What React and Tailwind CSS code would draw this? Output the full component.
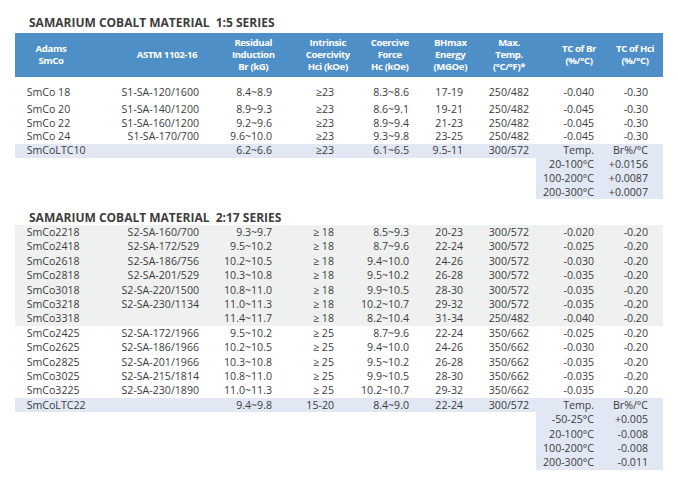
const COLS = "grid grid-cols-[94px_101px_80.5px_68.5px_61.5px_59.5px_64px_63px_56px]"

const CELL = [
  "pl-[11.7px] text-left",
  "pr-[11px] text-right",
  "pr-[18.5px] text-right",
  "pr-[25px] text-right",
  "pr-[11.5px] text-right",
  "pr-[17px] text-right",
  "pr-[15px] text-right",
  "pr-[13px] text-right",
  "pr-[15px] text-right",
]

const HEAD = [
  { cls: "pr-[22px]", lines: ["Adams", "SmCo"] },
  { cls: "pl-[15px]", lines: ["ASTM 1102-16"] },
  { cls: "pl-[6px]", lines: ["Residual", "Induction", "Br (kG)"] },
  { cls: "pl-[6px]", lines: ["Intrinsic", "Coercivity", "Hci (kOe)"] },
  { cls: "", lines: ["Coercive", "Force", "Hc (kOe)"] },
  { cls: "", lines: ["BHmax", "Energy", "(MGOe)"] },
  { cls: "pr-[6px]", lines: ["Max.", "Temp.", "(°C/°F)*"] },
  { cls: "pl-[7px]", lines: ["TC of Br", "(%/°C)"] },
  { cls: "", lines: ["TC of Hci", "(%/°C)"] },
]

const series15 = [
  ["SmCo 18", "S1-SA-120/1600", "8.4~8.9", "≥23", "8.3~8.6", "17-19", "250/482", "-0.040", "-0.30"],
  ["SmCo 20", "S1-SA-140/1200", "8.9~9.3", "≥23", "8.6~9.1", "19-21", "250/482", "-0.045", "-0.30"],
  ["SmCo 22", "S1-SA-160/1200", "9.2~9.6", "≥23", "8.9~9.4", "21-23", "250/482", "-0.045", "-0.30"],
  ["SmCo 24", "S1-SA-170/700", "9.6~10.0", "≥23", "9.3~9.8", "23-25", "250/482", "-0.045", "-0.30"],
]
const ltc10 = ["SmCoLTC10", "", "6.2~6.6", "≥23", "6.1~6.5", "9.5-11", "300/572", "Temp.", "Br%/°C"]
const ltc10Temps = [
  ["20-100°C", "+0.0156"],
  ["100-200°C", "+0.0087"],
  ["200-300°C", "+0.0007"],
]

const series217a = [
  ["SmCo2218", "S2-SA-160/700", "9.3~9.7", "≥ 18", "8.5~9.3", "20-23", "300/572", "-0.020", "-0.20"],
  ["SmCo2418", "S2-SA-172/529", "9.5~10.2", "≥ 18", "8.7~9.6", "22-24", "300/572", "-0.025", "-0.20"],
  ["SmCo2618", "S2-SA-186/756", "10.2~10.5", "≥ 18", "9.4~10.0", "24-26", "300/572", "-0.030", "-0.20"],
  ["SmCo2818", "S2-SA-201/529", "10.3~10.8", "≥ 18", "9.5~10.2", "26-28", "300/572", "-0.035", "-0.20"],
  ["SmCo3018", "S2-SA-220/1500", "10.8~11.0", "≥ 18", "9.9~10.5", "28-30", "300/572", "-0.035", "-0.20"],
  ["SmCo3218", "S2-SA-230/1134", "11.0~11.3", "≥ 18", "10.2~10.7", "29-32", "300/572", "-0.035", "-0.20"],
  ["SmCo3318", "", "11.4~11.7", "≥ 18", "8.2~10.4", "31-34", "250/482", "-0.040", "-0.20"],
]
const series217b = [
  ["SmCo2425", "S2-SA-172/1966", "9.5~10.2", "≥ 25", "8.7~9.6", "22-24", "350/662", "-0.025", "-0.20"],
  ["SmCo2625", "S2-SA-186/1966", "10.2~10.5", "≥ 25", "9.4~10.0", "24-26", "350/662", "-0.030", "-0.20"],
  ["SmCo2825", "S2-SA-201/1966", "10.3~10.8", "≥ 25", "9.5~10.2", "26-28", "350/662", "-0.035", "-0.20"],
  ["SmCo3025", "S2-SA-215/1814", "10.8~11.0", "≥ 25", "9.9~10.5", "28-30", "350/662", "-0.035", "-0.20"],
  ["SmCo3225", "S2-SA-230/1890", "11.0~11.3", "≥ 25", "10.2~10.7", "29-32", "350/662", "-0.035", "-0.20"],
]
const ltc22 = ["SmCoLTC22", "", "9.4~9.8", "15-20", "8.4~9.0", "22-24", "300/572", "Temp.", "Br%/°C"]
const ltc22Temps = [
  ["-50-25°C", "+0.005"],
  ["20-100°C", "-0.008"],
  ["100-200°C", "-0.008"],
  ["200-300°C", "-0.011"],
]

function Row({ cells, className = "" }) {
  return (
    <div className={`${COLS} ${className}`}>
      {cells.map((c, i) => (
        <div key={i} className={`${CELL[i]} whitespace-nowrap`}>{c}</div>
      ))}
    </div>
  )
}

function TempRows({ rows, lh }) {
  return (
    <div className="flex justify-end">
      <div className={`w-[127.3px] bg-[#e1e8f4] ${lh}`}>
        {rows.map(([t, v]) => (
          <div key={t} className="grid grid-cols-[71.3px_56px]">
            <div className="pr-[13px] text-right whitespace-nowrap">{t}</div>
            <div className="pr-[15px] text-right whitespace-nowrap">{v}</div>
          </div>
        ))}
      </div>
    </div>
  )
}

function Title({ children, className = "" }) {
  return (
    <h2 className={`pl-[14px] text-[12px] font-bold text-[#3d3d3d] whitespace-pre ${className}`}>
      {children}
    </h2>
  )
}

export default function App() {
  return (
    <div className="w-[678px] h-[484px] bg-white pl-[15px] text-[#3b3b3b] font-['Open_Sans',sans-serif] text-[10.6px] overflow-hidden">
      <div className="w-[648px]">
        {/* 1:5 series */}
        <Title className="pt-[15px] leading-[16px] mb-[2px]">SAMARIUM COBALT MATERIAL  1:5 SERIES</Title>
        <div className={`${COLS} h-[44px] bg-[#4f8fc7] text-white font-bold text-[9.6px] leading-[12px] tracking-[-0.04em]`}>
          {HEAD.map((h, i) => (
            <div key={i} className={`flex flex-col items-center justify-center text-center ${h.cls}`}>
              {h.lines.map(l => (
                <span key={l} className="whitespace-nowrap">{l}</span>
              ))}
            </div>
          ))}
        </div>

        <div className="leading-[13.8px]">
          <Row cells={series15[0]} className="mt-[8.5px] mb-[3.5px]" />
          {series15.slice(1).map(r => (
            <Row key={r[0]} cells={r} />
          ))}
          <Row cells={ltc10} className="bg-[#e1e8f4]" />
          <TempRows rows={ltc10Temps} lh="leading-[13.8px]" />
        </div>

        {/* 2:17 series */}
        <Title className="mt-[10.5px] leading-[15px]">SAMARIUM COBALT MATERIAL  2:17 SERIES</Title>
        <div className="leading-[14.4px]">
          <div className="bg-[#eff1f1]">
            {series217a.map(r => (
              <Row key={r[0]} cells={r} />
            ))}
          </div>
          {series217b.map(r => (
            <Row key={r[0]} cells={r} />
          ))}
          <Row cells={ltc22} className="bg-[#e1e8f4]" />
          <TempRows rows={ltc22Temps} lh="leading-[14.4px]" />
        </div>
      </div>
    </div>
  )
}
